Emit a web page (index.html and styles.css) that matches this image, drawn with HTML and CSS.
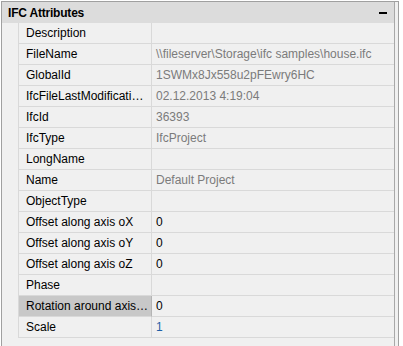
FILE: index.html
```html
<!DOCTYPE html>
<html lang="en">
<head>
  <meta charset="UTF-8">
  <title>IFC Attributes</title>
  <link rel="stylesheet" href="styles.css">
</head>
<body>
  <div class="panel">
    <div class="inner">
      <div class="panel-header">
        <span class="panel-title">IFC Attributes</span>
        <span class="collapse"></span>
      </div>

      <div class="grid">
        <div class="row"><div class="indent"></div><div class="label">Description</div><div class="value"></div></div>
        <div class="row"><div class="indent"></div><div class="label">FileName</div><div class="value readonly">\\fileserver\Storage\ifc samples\house.ifc</div></div>
        <div class="row"><div class="indent"></div><div class="label">GlobalId</div><div class="value readonly">1SWMx8Jx558u2pFEwry6HC</div></div>
        <div class="row"><div class="indent"></div><div class="label">IfcFileLastModificationDate</div><div class="value readonly">02.12.2013 4:19:04</div></div>
        <div class="row"><div class="indent"></div><div class="label">IfcId</div><div class="value readonly">36393</div></div>
        <div class="row"><div class="indent"></div><div class="label">IfcType</div><div class="value readonly">IfcProject</div></div>
        <div class="row"><div class="indent"></div><div class="label">LongName</div><div class="value"></div></div>
        <div class="row"><div class="indent"></div><div class="label">Name</div><div class="value readonly">Default Project</div></div>
        <div class="row"><div class="indent"></div><div class="label">ObjectType</div><div class="value"></div></div>
        <div class="row"><div class="indent"></div><div class="label">Offset along axis oX</div><div class="value">0</div></div>
        <div class="row"><div class="indent"></div><div class="label">Offset along axis oY</div><div class="value">0</div></div>
        <div class="row"><div class="indent"></div><div class="label">Offset along axis oZ</div><div class="value">0</div></div>
        <div class="row"><div class="indent"></div><div class="label">Phase</div><div class="value"></div></div>
        <div class="row selected"><div class="indent"></div><div class="label">Rotation around axis oZ</div><div class="value">0</div></div>
        <div class="row"><div class="indent"></div><div class="label">Scale</div><div class="value changed">1</div></div>
      </div>
    </div>
  </div>
</body>
</html>
```

FILE: styles.css
```css
body {
  margin: 0;
  background: #fff;
  font-family: "Liberation Sans", Arial, sans-serif;
  font-size: 12px;
  color: #000;
}

.panel {
  box-sizing: border-box;
  width: 398px;
  height: 345px;
  margin: 1px 0 0 1px;
  padding-right: 3px;
  background: #f0f0f0;
  border: 1px solid #a0a0a0;
  border-bottom: none;
}

.inner {
  height: 100%;
  border-right: 1px solid #a8a8a8;
}

.panel-header {
  display: flex;
  align-items: center;
  justify-content: space-between;
  height: 21px;
  padding: 0 7px 0 6px;
  background: #dcdcdc;
}

.panel-title {
  font-weight: bold;
  letter-spacing: -0.2px;
}

.collapse {
  width: 8px;
  height: 2px;
  margin-top: 1px;
  background: #000;
}

.row {
  display: grid;
  grid-template-columns: 16px 134px 1fr;
  height: 21px;
  line-height: 21px;
}

.indent {
  background: #f0f0f0;
}

.label,
.value {
  border-bottom: 1px solid #d9d9d9;
  white-space: nowrap;
  overflow: hidden;
  text-overflow: ellipsis;
}

.label {
  padding: 0 1px 0 7px;
  border-left: 1px solid #d9d9d9;
  border-right: 1px solid #d9d9d9;
}

.value {
  padding-left: 4px;
}

.readonly {
  color: #7b7b7b;
}

.changed {
  color: #1f5fa6;
}

.selected .label {
  background: #c8c8c8;
  border-right-color: #b4b4b4;
}
```
